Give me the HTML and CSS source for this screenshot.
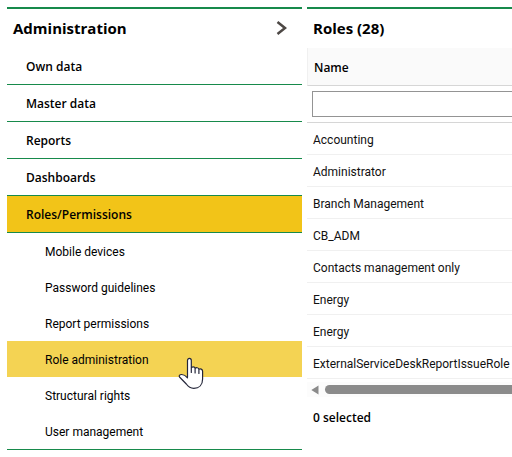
FILE: index.html
```
<!DOCTYPE html>
<html lang="en">
<head>
<meta charset="utf-8">
<meta name="viewport" content="width=device-width, initial-scale=1">
<title>Administration</title>
<link rel="stylesheet" href="styles.css">
</head>
<body>
<div class="layout">
  <nav class="panel sidebar" aria-labelledby="nav-title">
    <header class="panel-header">
      <h1 class="panel-title" id="nav-title">Administration</h1>
      <button class="toggle" type="button" aria-label="Collapse">
        <svg width="12" height="14" viewBox="0 0 12 14" aria-hidden="true"><path d="M1.500 1 9 7l-7.500 6" fill="none" stroke="#4d4845" stroke-width="2.500"/></svg>
      </button>
    </header>
    <ul class="menu">
      <li><a class="menu-link" href="#">Own data</a></li>
      <li><a class="menu-link" href="#">Master data</a></li>
      <li><a class="menu-link" href="#">Reports</a></li>
      <li><a class="menu-link" href="#">Dashboards</a></li>
      <li><a class="menu-link open" href="#">Roles/Permissions</a>
        <ul class="submenu">
          <li><a class="sub-link" href="#">Mobile devices</a></li>
          <li><a class="sub-link" href="#">Password guidelines</a></li>
          <li><a class="sub-link" href="#">Report permissions</a></li>
          <li class="pointed"><a class="sub-link active" href="#">Role administration</a>
            <svg class="cursor" width="27" height="33" viewBox="0 0 27 33" aria-hidden="true"><path d="M9.500 20V3.500C9.500.7 13.300.7 13.300 3.500V11c.5-1.600 3.400-1.600 3.800.5 1-1.300 3.400-.9 3.800.8 1.300-.9 3.700-.2 3.700 2V22c0 6-3.600 9.300-8.800 9.300-3.500 0-5.500-1.500-7.500-4.300L1.500 20c-1-1.500.5-2.600 2.200-2.500 2 .1 3.800 1 5.800 3.400M13.300 10.500V15.500M17.100 11.500V16M20.900 12.500V16.500" fill="#fff" stroke="#25273a" stroke-width="1.200" stroke-linecap="round" stroke-linejoin="round"/></svg>
          </li>
          <li><a class="sub-link" href="#">Structural rights</a></li>
          <li><a class="sub-link" href="#">User management</a></li>
        </ul>
      </li>
    </ul>
  </nav>
  <main class="panel roles">
    <header class="panel-header">
      <h2 class="panel-title">Roles (28)</h2>
    </header>
    <div class="table-view">
      <table class="grid">
        <thead>
          <tr><th scope="col">Name</th></tr>
          <tr><td class="filter"><input type="text" aria-label="Filter by name"></td></tr>
        </thead>
        <tbody>
          <tr><td>Accounting</td></tr>
          <tr><td>Administrator</td></tr>
          <tr><td>Branch Management</td></tr>
          <tr><td>CB_ADM</td></tr>
          <tr><td>Contacts management only</td></tr>
          <tr><td>Energy</td></tr>
          <tr><td>Energy</td></tr>
          <tr><td>ExternalServiceDeskReportIssueRole</td></tr>
        </tbody>
      </table>
    </div>
    <div class="scrollbar">
      <svg width="8" height="10" viewBox="0 0 8 10" aria-hidden="true"><path d="M7.500.5v9L.3 5z" fill="#8b8b8b"/></svg>
      <div class="thumb"></div>
    </div>
    <p class="status">0 selected</p>
  </main>
</div>
</body>
</html>
```
FILE: styles.css
```
* {
  box-sizing: border-box;
}

body {
  margin: 0;
  background: #fff;
  color: #111;
  font: 12px/20px Roboto, sans-serif;
}

ul {
  margin: 0;
  padding: 0;
  list-style: none;
}

.layout {
  display: grid;
  grid-template-columns: 295px minmax(0, 1fr);
  gap: 5px;
  align-items: start;
  padding: 7px 0 0 7px;
}

.panel {
  border-top: 2px solid #178a4b;
}

.panel-header {
  display: flex;
  align-items: center;
  justify-content: space-between;
  height: 39px;
  padding: 0 14px 2px 6px;
}

.panel-title,
.menu-link,
.grid th,
.status {
  color: #000;
  font-family: "Open Sans", sans-serif;
  font-weight: 700;
}

.panel-title {
  margin: 0;
  font-size: 15px;
}

.toggle {
  display: flex;
  padding: 0;
  border: 0;
  background: none;
}

.menu {
  border-bottom: 1px solid #178a4b;
}

.menu-link,
.sub-link {
  display: flex;
  align-items: center;
  color: #000;
  text-decoration: none;
}

.menu-link {
  height: 37px;
  padding: 2px 0 0 19px;
  border-bottom: 1px solid #178a4b;
  font-weight: 600;
}

.menu-link.open {
  background: #f2c418;
}

.sub-link {
  height: 36px;
  padding: 1px 0 0 38px;
}

.sub-link.active {
  background: #f4d353;
}

.pointed {
  position: relative;
}

.cursor {
  position: absolute;
  top: 16px;
  left: 171px;
  z-index: 1;
}

.roles {
  overflow: hidden;
}

.table-view {
  overflow: hidden;
}

.grid {
  width: calc(100% + 120px);
  border-collapse: separate;
  border-spacing: 0;
}

.grid th {
  height: 38px;
  padding: 2px 6px 0;
  border-bottom: 1px solid #d6d6d6;
  border-left: 1px solid #f0f0f0;
  background: #fafafa;
  font-weight: 600;
  text-align: left;
}

.grid td {
  height: 32px;
  padding: 2px 6px 0;
  border-bottom: 1px solid #f0f0f0;
}

.grid .filter {
  height: 37px;
  padding: 0 5px;
  border-bottom-color: #d6d6d6;
}

.filter input {
  display: block;
  width: 100%;
  height: 26px;
  padding: 0 6px;
  border: 1px solid #949494;
  font: inherit;
}

.scrollbar {
  display: flex;
  align-items: center;
  gap: 6px;
  height: 15px;
  margin-top: 3px;
  padding-left: 4px;
  background: #fcfcfc;
}

.thumb {
  flex: 1;
  height: 9px;
  border-radius: 5px 0 0 5px;
  background: #8b8b8b;
}

.status {
  margin: 0;
  padding: 11px 6px;
  font-weight: 600;
}
```
